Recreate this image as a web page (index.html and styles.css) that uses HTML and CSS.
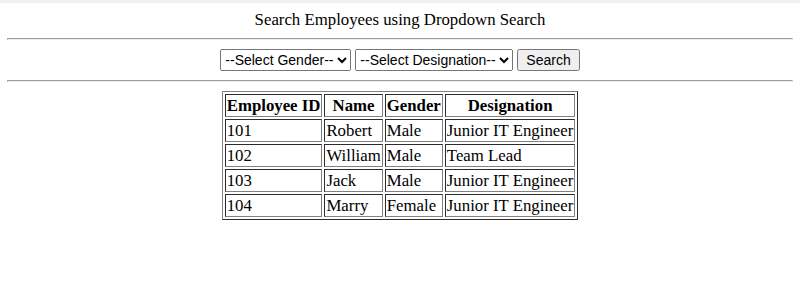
FILE: index.html
```html
<!doctype html>
<html>
    <head>
        <meta charset="UTF-8">
        <title>Dropdown Search</title>
        <link rel="stylesheet" href="styles.css">
    </head>
    <body>
        <div class="topbar"></div>
        <div class="page">
            <div class="title">Search Employees using Dropdown Search</div>
            <hr>
            <form class="search">
                <select name="gender">
                    <option>--Select Gender--</option>
                    <option>Male</option>
                    <option>Female</option>
                </select>
                <select name="designation">
                    <option>--Select Designation--</option>
                    <option>Junior IT Engineer</option>
                    <option>Team Lead</option>
                </select>
                <button type="button">Search</button>
            </form>
            <hr>
            <table class="employees" border="1">
                <tr>
                    <th>Employee ID</th>
                    <th>Name</th>
                    <th>Gender</th>
                    <th>Designation</th>
                </tr>
                <tr>
                    <td>101</td>
                    <td>Robert</td>
                    <td>Male</td>
                    <td>Junior IT Engineer</td>
                </tr>
                <tr>
                    <td>102</td>
                    <td>William</td>
                    <td>Male</td>
                    <td>Team Lead</td>
                </tr>
                <tr>
                    <td>103</td>
                    <td>Jack</td>
                    <td>Male</td>
                    <td>Junior IT Engineer</td>
                </tr>
                <tr>
                    <td>104</td>
                    <td>Marry</td>
                    <td>Female</td>
                    <td>Junior IT Engineer</td>
                </tr>
            </table>
        </div>
    </body>
</html>
```

FILE: styles.css
```css
html, body {
    margin: 0;
    background-color: #fff;
}

* {
    font-family: "Liberation Serif", serif;
    color: #000;
}

.topbar {
    height: 3px;
    background-color: #f0f0f0;
}

.page {
    margin: 7px 7px 8px;
}

.title {
    text-align: center;
    font-size: 16.8px;
    line-height: 20px;
}

hr {
    margin: 8px 0;
    border: 1px inset #eee;
}

.search {
    text-align: center;
    padding: 1px 0;
}

select, button {
    font-family: "Liberation Sans", Arial, sans-serif;
    font-size: 14px;
    height: 22px;
}

button {
    padding: 1px 7px;
}

.employees {
    margin: 9px auto 0;
    font-size: 16.8px;
    line-height: 19px;
}

.employees th, .employees td {
    padding: 1px;
}
```
